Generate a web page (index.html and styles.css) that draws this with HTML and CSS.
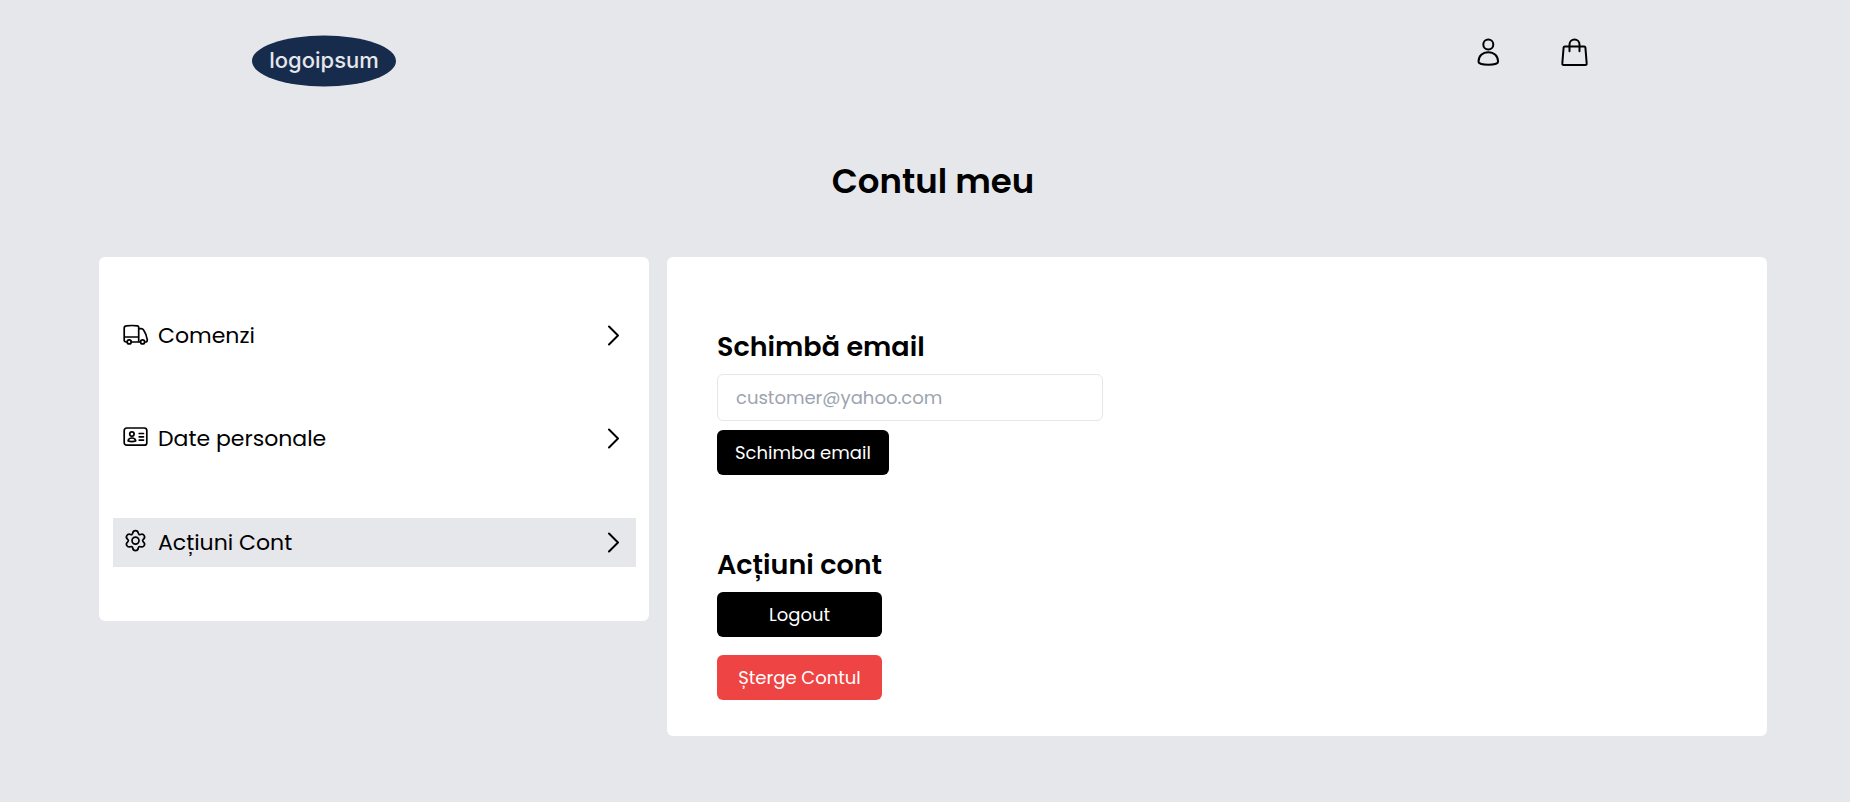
FILE: index.html
```html
<!DOCTYPE html>
<html lang="ro">
<head>
<meta charset="utf-8">
<meta name="viewport" content="width=device-width, initial-scale=1">
<title>Contul meu</title>
<link rel="stylesheet" href="styles.css">
</head>
<body>
<header class="site-header">
  <a href="#" class="logo" aria-label="logoipsum">
    <svg width="144" height="52" viewBox="0 0 144 52">
      <ellipse class="logo-shape" cx="72" cy="26" rx="72" ry="25.500"/>
      <text class="logo-text" x="72" y="33" text-anchor="middle">logoipsum</text>
    </svg>
  </a>
  <nav class="header-nav" aria-label="Cont">
    <a href="#" class="nav-icon" aria-label="Contul meu">
      <svg width="32" height="32" viewBox="0 0 32 32"><circle cx="16.300" cy="7.500" r="5"/><path d="M6.500 24.800c0-5.800 4.100-9.600 9.800-9.600s9.800 3.800 9.800 9.600c0 1.800-4.600 3-9.800 3s-9.800-1.200-9.800-3z"/></svg>
    </a>
    <a href="#" class="nav-icon" aria-label="Coș">
      <svg width="32" height="32" viewBox="0 0 32 32"><path d="M6.800 9.500h19.400c.6 0 1.100.4 1.200 1l1.300 16.200c.1.800-.5 1.400-1.200 1.400H5.500c-.7 0-1.300-.6-1.200-1.400L5.600 10.500c.1-.6.600-1 1.200-1z"/><path d="M11.500 14.300V7.500a5 5 0 0 1 10 0v6.800"/></svg>
    </a>
  </nav>
</header>
<main class="account">
  <h1 class="page-title">Contul meu</h1>
  <div class="columns">
    <nav class="card menu" aria-label="Meniu cont">
      <a href="#" class="menu-item">
        <svg class="menu-icon" width="27" height="27" viewBox="0 0 27 27"><path d="M4.800 21H4a1.800 1.800 0 0 1-1.800-1.800V7c0-1.200.9-2.100 2.100-2.200q5.600-.6 11.200 0c.7.100 1.200.7 1.200 1.400V21H9.300M2.200 16h14.500M16.700 7.700h2.500c1 0 1.900.5 2.400 1.300 2 3 3.300 6.300 3.700 9.900.1 1.100-.6 2.100-1.700 2.100M16.700 21h1.600"/><circle cx="7.200" cy="20.900" r="2"/><circle cx="20.600" cy="20.900" r="2"/></svg>
        <span class="menu-label">Comenzi</span>
        <svg class="chevron" width="27" height="27" viewBox="0 0 27 27"><path d="M9 4.500l9 9-9 9"/></svg>
      </a>
      <a href="#" class="menu-item">
        <svg class="menu-icon" width="27" height="27" viewBox="0 0 27 27"><rect x="2.200" y="4" width="22.600" height="17.200" rx="2.500"/><circle cx="9.900" cy="10.100" r="2.200"/><path d="M6.100 16.900c.2-1.800 1.700-2.900 3.800-2.900s3.600 1.100 3.800 2.900q-3.800 1.300-7.600 0zM17.200 9.500h4.300M17.200 12.800h4.300M17.200 16.100h4.300"/></svg>
        <span class="menu-label">Date personale</span>
        <svg class="chevron" width="27" height="27" viewBox="0 0 27 27"><path d="M9 4.500l9 9-9 9"/></svg>
      </a>
      <a href="#" class="menu-item active" aria-current="page">
        <svg class="menu-icon" width="27" height="27" viewBox="0 0 27 27"><path d="M10.700 5.200c.3-1.800 1.300-2.600 2.800-2.600s2.500.8 2.800 2.600c.2 1.100 1.100 1.700 2.200 1.300 1.700-.6 2.900-.2 3.700 1.100s.5 2.600-.9 3.700c-.9.800-.9 1.800 0 2.600 1.400 1.200 1.700 2.400.9 3.700s-2 1.700-3.700 1.100c-1.100-.4-2 .2-2.200 1.300-.3 1.800-1.300 2.600-2.800 2.600s-2.500-.8-2.800-2.600c-.2-1.100-1.100-1.700-2.200-1.300-1.700.6-2.900.2-3.700-1.100s-.5-2.500.9-3.700c.9-.8.900-1.800 0-2.600-1.400-1.100-1.700-2.400-.9-3.700s2-1.700 3.700-1.100c1.100.4 2-.2 2.200-1.300z"/><circle cx="13.500" cy="12.600" r="3.500"/></svg>
        <span class="menu-label">Acțiuni Cont</span>
        <svg class="chevron" width="27" height="27" viewBox="0 0 27 27"><path d="M9 4.500l9 9-9 9"/></svg>
      </a>
    </nav>
    <div class="card content">
      <form class="section">
        <label class="section-title" for="email">Schimbă email</label>
        <input class="field" id="email" type="email" placeholder="customer@yahoo.com">
        <button class="button" type="button">Schimba email</button>
      </form>
      <section class="section actions">
        <h2 class="section-title">Acțiuni cont</h2>
        <button class="button" type="button">Logout</button>
        <button class="button danger" type="button">Șterge Contul</button>
      </section>
    </div>
  </div>
</main>
</body>
</html>
```
FILE: styles.css
```css
*, *::before, *::after { box-sizing: border-box; }
body {
  margin: 0;
  background: #e5e7eb;
  color: #000;
  font-family: Poppins, Inter, sans-serif;
  font-size: 18px;
}
a { color: inherit; text-decoration: none; }
svg { display: block; fill: none; stroke: currentColor; stroke-linecap: round; stroke-linejoin: round; }
.site-header {
  display: flex;
  justify-content: space-between;
  align-items: flex-start;
  padding: 35px 260px 0 252px;
}
.logo-shape { fill: #172b4d; stroke: none; }
.logo-text {
  fill: #e5e7eb;
  stroke: none;
  font-family: Inter, sans-serif;
  font-size: 22px;
  font-weight: 500;
}
.header-nav { display: flex; gap: 54px; }
.nav-icon { stroke-width: 2; padding-top: 2px; }
.account { padding: 0 83px 66px 99px; }
.page-title {
  margin: 67px 0 49px;
  font-size: 34px;
  line-height: 54px;
  font-weight: 600;
  text-align: center;
}
.columns {
  display: grid;
  grid-template-columns: minmax(0, 1fr) minmax(0, 2fr);
  gap: 18px;
  align-items: start;
}
.card { background: #fff; border-radius: 6px; }
.menu {
  display: flex;
  flex-direction: column;
  gap: 54px;
  padding: 54px 13px 54px 14px;
}
.menu-item {
  display: flex;
  align-items: center;
  gap: 9px;
  padding: 7px 9px;
  font-size: 22px;
  line-height: 35px;
  stroke-width: 2;
}
.menu-item.active { background: #e5e7eb; margin-top: 1px; }
.menu-icon { stroke-width: 1.7; margin-bottom: 3px; }
.menu-label { flex: 1; }
.content {
  display: flex;
  flex-direction: column;
  gap: 72px;
  padding: 72px 50px 36px;
}
.section {
  display: flex;
  flex-direction: column;
  align-items: flex-start;
  gap: 9px;
}
.section-title {
  margin: 0;
  font-size: 27px;
  line-height: 36px;
  font-weight: 600;
}
.field {
  width: 386px;
  max-width: 100%;
  height: 47px;
  padding: 0 18px;
  border: 1px solid #e5e7eb;
  border-radius: 6px;
  font: inherit;
}
.field::placeholder { color: #9ca3af; opacity: 1; }
.button {
  min-height: 45px;
  padding: 0 18px;
  border: 0;
  border-radius: 6px;
  background: #000;
  color: #fff;
  font: inherit;
}
.actions { align-self: flex-start; align-items: stretch; }
.danger { margin-top: 9px; background: #ef4444; }
```
